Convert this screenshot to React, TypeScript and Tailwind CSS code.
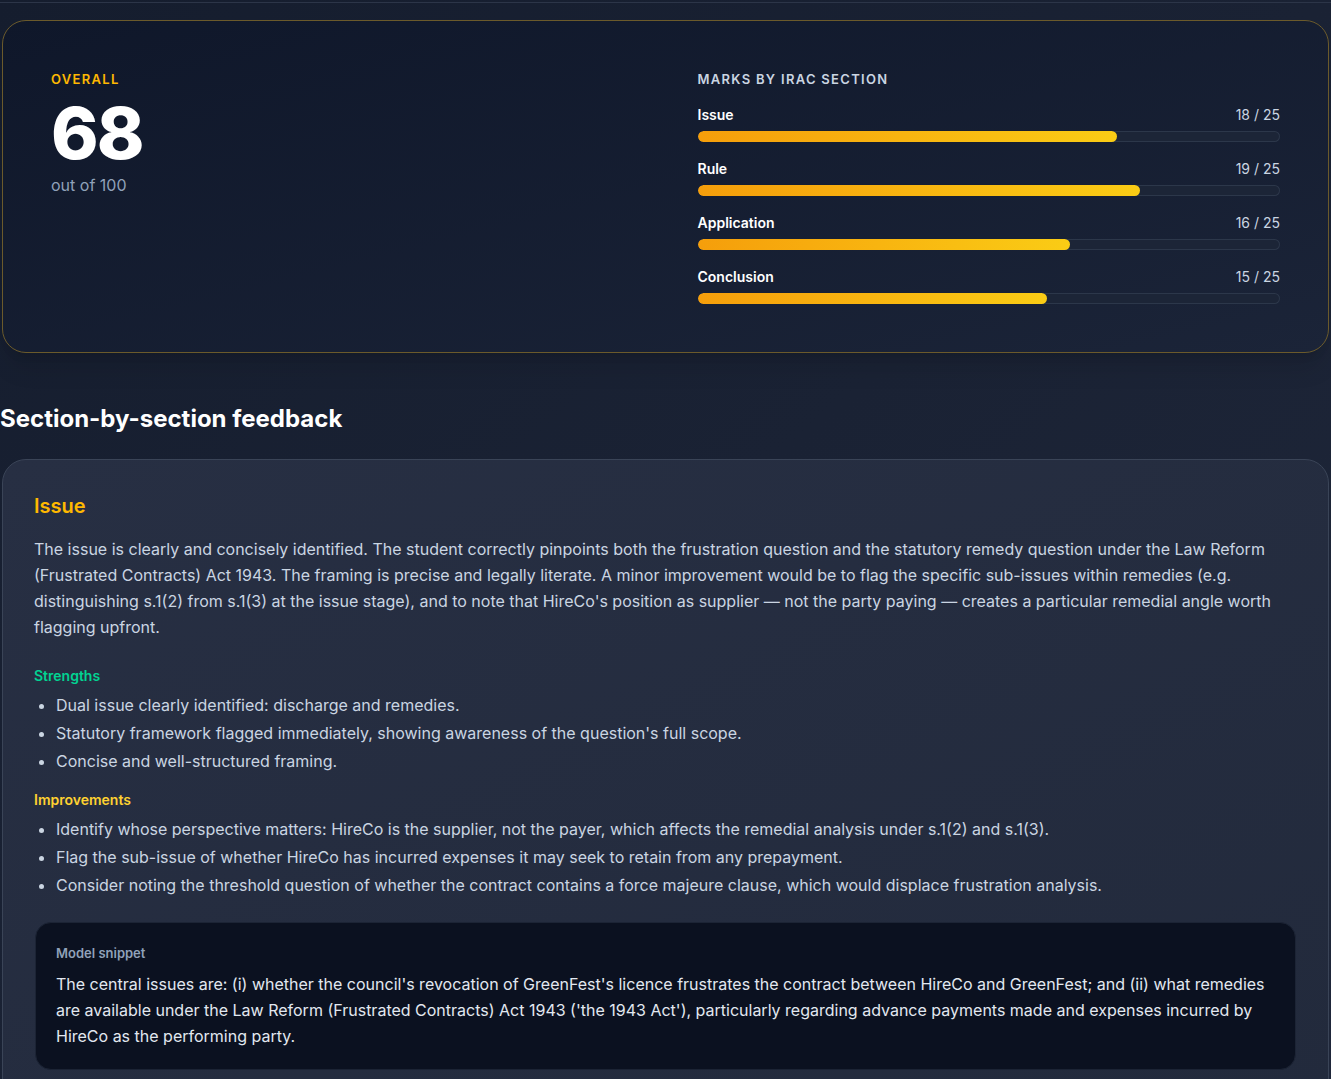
import React from 'react';

interface SectionMark {
  name: string;
  score: number;
  max: number;
}

const marks: SectionMark[] = [
  { name: 'Issue', score: 18, max: 25 },
  { name: 'Rule', score: 19, max: 25 },
  { name: 'Application', score: 16, max: 25 },
  { name: 'Conclusion', score: 15, max: 25 },
];

const strengths = [
  'Dual issue clearly identified: discharge and remedies.',
  "Statutory framework flagged immediately, showing awareness of the question's full scope.",
  'Concise and well-structured framing.',
];

const improvements = [
  'Identify whose perspective matters: HireCo is the supplier, not the payer, which affects the remedial analysis under s.1(2) and s.1(3).',
  'Flag the sub-issue of whether HireCo has incurred expenses it may seek to retain from any prepayment.',
  'Consider noting the threshold question of whether the contract contains a force majeure clause, which would displace frustration analysis.',
];

const MarkBar: React.FC<{ mark: SectionMark }> = ({ mark }) => {
  const pct = (mark.score / mark.max) * 100;
  return (
    <div>
      <div className="flex items-center justify-between text-[14px] leading-5">
        <span className="font-semibold text-white">{mark.name}</span>
        <span className="text-slate-300">
          {mark.score} / {mark.max}
        </span>
      </div>
      <div className="mt-[6px] h-[11px] w-full rounded-full bg-[#1c2537] ring-1 ring-inset ring-[#2c374a] overflow-hidden">
        <div
          className="h-full rounded-full bg-gradient-to-r from-[#f59e0b] to-[#facc15]"
          style={{ width: `${pct}%` }}
        />
      </div>
    </div>
  );
};

const BulletList: React.FC<{ items: string[] }> = ({ items }) => (
  <ul className="mt-[6px] list-disc pl-[22px] space-y-[2px] text-[16px] leading-[26px] text-slate-300 marker:text-slate-300">
    {items.map((item) => (
      <li key={item}>{item}</li>
    ))}
  </ul>
);

export default function App() {
  return (
    <div
      className="min-h-screen bg-gradient-to-br from-[#151d2e] via-[#1a2234] to-[#1f273a] text-white"
      style={{ fontFamily: 'Inter, "Noto Sans", sans-serif' }}
    >
      <div className="h-[3px] border-b border-[#2c3548]" />

      <section className="mx-[2px] mt-[17px] rounded-3xl border border-[#6b5a2b] bg-gradient-to-br from-[#0f172a] to-[#1b2438] p-12 shadow-xl">
        <div className="grid grid-cols-2 gap-16">
          <div>
            <div className="text-[13px] leading-5 font-semibold tracking-widest text-amber-400">
              OVERALL
            </div>
            <div className="mt-2 text-[72px] leading-none font-extrabold tracking-tight text-white">
              68
            </div>
            <div className="mt-1 text-[16px] leading-6 text-slate-400">out of 100</div>
          </div>
          <div>
            <div className="text-[13px] leading-5 font-semibold tracking-widest text-slate-300">
              MARKS BY IRAC SECTION
            </div>
            <div className="mt-4 flex flex-col gap-[17px]">
              {marks.map((m) => (
                <MarkBar key={m.name} mark={m} />
              ))}
            </div>
          </div>
        </div>
      </section>

      <h2 className="mt-[50px] mb-[24px] text-[24px] leading-8 font-bold text-white">
        Section-by-section feedback
      </h2>

      <section className="mx-[2px] rounded-3xl border border-[#3a4457] bg-gradient-to-br from-[#272f43] to-[#222a3c] px-[31px] py-8">
        <h3 className="text-[20px] leading-7 font-semibold text-amber-400">Issue</h3>
        <p className="mt-4 text-[16px] leading-[26px] text-slate-300">
          The issue is clearly and concisely identified. The student correctly pinpoints both the
          frustration question and the statutory remedy question under the Law Reform (Frustrated
          Contracts) Act 1943. The framing is precise and legally literate. A minor improvement
          would be to flag the specific sub-issues within remedies (e.g. distinguishing s.1(2) from
          s.1(3) at the issue stage), and to note that HireCo's position as supplier — not the
          party paying — creates a particular remedial angle worth flagging upfront.
        </p>

        <div className="mt-[26px] text-[14px] leading-5 font-semibold text-emerald-400">
          Strengths
        </div>
        <BulletList items={strengths} />

        <div className="mt-4 text-[14px] leading-5 font-semibold text-amber-300">
          Improvements
        </div>
        <BulletList items={improvements} />

        <div className="mx-[1px] mt-6 rounded-2xl border border-[#1c2435] bg-[#0b1120] p-5">
          <div className="text-[13px] leading-5 font-semibold text-slate-400">Model snippet</div>
          <p className="mt-2 text-[16px] leading-[26px] text-slate-200">
            The central issues are: (i) whether the council's revocation of GreenFest's licence
            frustrates the contract between HireCo and GreenFest; and (ii) what remedies are
            available under the Law Reform (Frustrated Contracts) Act 1943 ('the 1943 Act'),
            particularly regarding advance payments made and expenses incurred by HireCo as the
            performing party.
          </p>
        </div>
      </section>
    </div>
  );
}
